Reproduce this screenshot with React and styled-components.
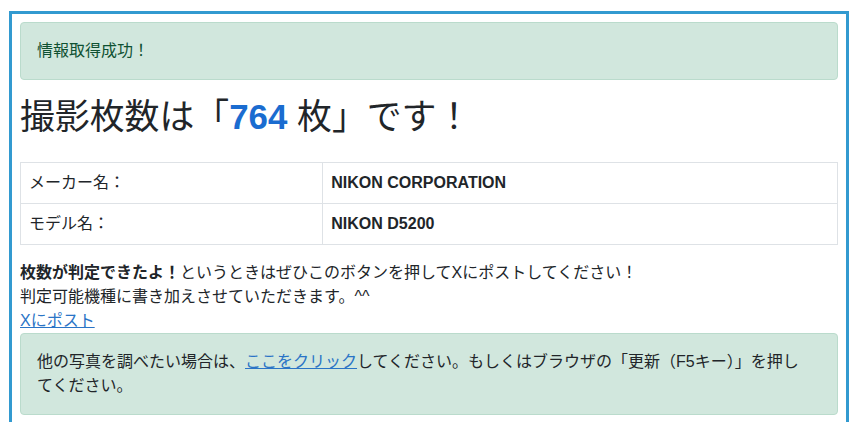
import React from "react";
import styled, { createGlobalStyle } from "styled-components";

const GlobalStyle = createGlobalStyle`
  html, body {
    margin: 0;
    padding: 0;
    background: #fff;
  }
  body {
    font-family: "Liberation Sans", "Noto Sans CJK JP", sans-serif;
    font-size: 16px;
    line-height: 1.5;
    color: #212529;
  }
`;

const Frame = styled.div`
  margin: 11px 8px 0 9px;
  border: 3px solid #329ad0;
  padding: 8px 8px 16px;
  min-height: 420px;
  box-sizing: border-box;
`;

const Alert = styled.div`
  padding: 16px ${(p) => (p.$wide ? "26px" : "16px")} 16px 16px;
  border: 1px solid #badbcc;
  border-radius: 4px;
  background: #d1e7dd;
  color: ${(p) => (p.$dark ? "#212529" : "#0f5132")};
  margin-bottom: 16px;
`;

const Title = styled.h1`
  margin: 0 0 24px;
  font-size: 34.86px;
  font-weight: 400;
  line-height: 1.2;
  color: #212529;
`;

const Count = styled.strong`
  color: #1a6cd0;
  font-weight: 700;
`;

const InfoTable = styled.table`
  width: 100%;
  border-collapse: collapse;
  margin-bottom: 16px;
`;

const Cell = styled.td`
  border: 1px solid #dee2e6;
  padding: 8px;
  width: ${(p) => p.$width || "auto"};
  font-weight: ${(p) => (p.$bold ? 700 : 400)};
`;

const Note = styled.div`
  margin: 0;
`;

const Link = styled.a`
  color: #2a74c6;
  text-decoration: underline;
`;

export default function App() {
  return (
    <>
      <GlobalStyle />
      <Frame>
        <Alert>情報取得成功！</Alert>
        <Title>
          撮影枚数は「<Count>764</Count> 枚」です！
        </Title>
        <InfoTable>
          <tbody>
            <tr>
              <Cell $width="37%">メーカー名：</Cell>
              <Cell $bold>NIKON CORPORATION</Cell>
            </tr>
            <tr>
              <Cell $width="37%">モデル名：</Cell>
              <Cell $bold>NIKON D5200</Cell>
            </tr>
          </tbody>
        </InfoTable>
        <Note>
          <strong>枚数が判定できたよ！</strong>
          というときはぜひこのボタンを押してXにポストしてください！
          <br />
          判定可能機種に書き加えさせていただきます。^^
          <br />
          <Link href="#">Xにポスト</Link>
        </Note>
        <Alert $dark $wide>
          他の写真を調べたい場合は、<Link href="#">ここをクリック</Link>
          してください。もしくはブラウザの「更新（F5キー）」を押してください。
        </Alert>
      </Frame>
    </>
  );
}
